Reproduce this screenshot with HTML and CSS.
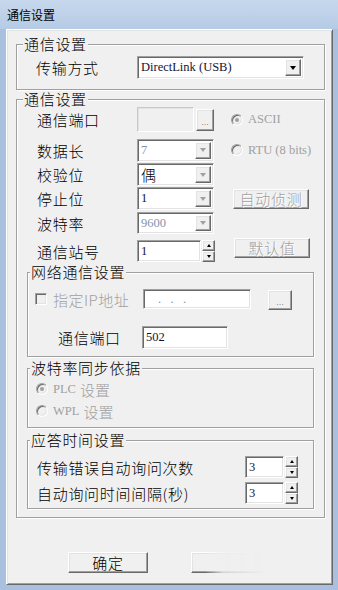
FILE: index.html
```html
<!DOCTYPE html>
<html lang="zh-CN">
<head>
    <meta charset="UTF-8">
    <meta name="viewport" content="width=device-width, initial-scale=1.0">
    <title>通信设置</title>
    <link rel="stylesheet" href="styles.css">
</head>
<body>

    <div class="window">
        <div class="titlebar">通信设置</div>

        <div class="client">
            <fieldset class="group g-mode">
                <legend>通信设置</legend>
                <div class="mode-row">
                    <span class="label mode-label">传输方式</span>
                    <div class="combo wide">
                        <span class="value">DirectLink (USB)</span>
                        <span class="drop"><i class="tri"></i></span>
                    </div>
                </div>
            </fieldset>

            <fieldset class="group g-comm">
                <legend>通信设置</legend>
                <div class="fields">
                    <div class="row r1">
                        <span class="label">通信端口</span>
                        <div class="port-pick">
                            <div class="field off port-field"></div>
                            <button class="btn dots">...</button>
                        </div>
                        <div class="radio-item"><span class="radio on"></span>ASCII</div>
                    </div>
                    <div class="row r2">
                        <span class="label">数据长</span>
                        <div class="combo"><span class="value dim">7</span><span class="drop"><i class="tri gray"></i></span></div>
                        <div class="radio-item"><span class="radio"></span>RTU (8 bits)</div>
                    </div>
                    <div class="row r3">
                        <span class="label">校验位</span>
                        <div class="combo"><span class="value cjk">偶</span><span class="drop"><i class="tri gray"></i></span></div>
                    </div>
                    <div class="row r4">
                        <span class="label">停止位</span>
                        <div class="combo"><span class="value">1</span><span class="drop"><i class="tri gray"></i></span></div>
                        <button class="btn side off">自动侦测</button>
                    </div>
                    <div class="row r5">
                        <span class="label">波特率</span>
                        <div class="combo short"><span class="value dim">9600</span><span class="drop"><i class="tri gray"></i></span></div>
                    </div>
                    <div class="row r6">
                        <span class="label">通信站号</span>
                        <div class="spin-box">
                            <div class="field station"><span class="value">1</span></div>
                            <div class="spin"><span><i class="tri up small"></i></span><span><i class="tri small"></i></span></div>
                        </div>
                        <button class="btn side off raise">默认值</button>
                    </div>
                </div>

                <fieldset class="group sub g-net">
                    <legend>网络通信设置</legend>
                    <div class="ip-row">
                        <div class="check-item"><span class="check"></span>指定IP地址</div>
                        <div class="field ip-field"><span class="value dim">.&nbsp;&nbsp;&nbsp;.&nbsp;&nbsp;&nbsp;.</span></div>
                        <button class="btn dots ip-dots">...</button>
                    </div>
                    <div class="net-port">
                        <span class="label">通信端口</span>
                        <div class="field net-field"><span class="value">502</span></div>
                    </div>
                </fieldset>

                <fieldset class="group sub g-sync">
                    <legend>波特率同步依据</legend>
                    <div class="sync-row"><div class="radio-item"><span class="radio on"></span>PLC <span class="cjk">设置</span></div></div>
                    <div class="sync-row"><div class="radio-item"><span class="radio"></span>WPL <span class="cjk">设置</span></div></div>
                </fieldset>

                <fieldset class="group sub g-reply">
                    <legend>应答时间设置</legend>
                    <div class="reply-row">
                        <span class="label">传输错误自动询问次数</span>
                        <div class="spin-box">
                            <div class="field small-field"><span class="value">3</span></div>
                            <div class="spin"><span><i class="tri up small"></i></span><span><i class="tri small"></i></span></div>
                        </div>
                    </div>
                    <div class="reply-row second">
                        <span class="label">自动询问时间间隔(秒)</span>
                        <div class="spin-box">
                            <div class="field small-field"><span class="value">3</span></div>
                            <div class="spin"><span><i class="tri up small"></i></span><span><i class="tri small"></i></span></div>
                        </div>
                    </div>
                </fieldset>
            </fieldset>

            <div class="actions">
                <button class="btn action">确定</button>
                <button class="btn action faded"></button>
            </div>
        </div>
    </div>

</body>
</html>
```

FILE: styles.css
```css
* {
    box-sizing: border-box;
}
body {
    margin: 0;
    background: #a9c1de;
    font-family: "Noto Sans CJK SC", sans-serif;
    color: #000;
}
.window {
    width: 338px;
    height: 590px;
    background: #a9c1de;
    display: flex;
    flex-direction: column;
}
.titlebar {
    height: 29px;
    line-height: 29px;
    padding-left: 7px;
    font-size: 12px;
    background: linear-gradient(to bottom, #c7d8ed, #b5cbe5);
}
.client {
    margin-left: 6px;
    width: 327px;
    height: 556px;
    background: #f0f0f0;
    border: 1px solid;
    border-color: #fff #696969 #696969 #fff;
    box-shadow: inset 1px 1px 0 #e3e3e3, inset -1px -1px 0 #a0a0a0;
    padding: 6px 7px 0 9px;
}

/* group boxes */
.group {
    margin: 0;
    min-width: 0;
    border: 1px solid #a0a0a0;
    box-shadow: inset 1px 1px 0 #fff, 1px 1px 0 #fff;
    padding: 0 10px 8px 6px;
}
.group legend {
    padding: 0 1px;
    font-size: 15px;
    line-height: 16px;
    font-weight: 300;
    letter-spacing: 0.7px;
    background: #f0f0f0;
}
.g-mode { padding-top: 4px; padding-bottom: 10px; }
.g-comm { margin-top: 1px; }
.sub {
    margin-left: 4px;
    padding: 0 0 0 2px;
}
.g-net { margin-top: 2px; padding-top: 9px; padding-bottom: 7px; }
.g-sync { margin-top: 3px; padding-top: 2px; padding-bottom: 5px; }
.g-reply { margin-top: 4px; padding-top: 8px; padding-bottom: 4px; }

.label {
    font-size: 15px;
    font-weight: 300;
    letter-spacing: 0.7px;
    white-space: nowrap;
}

/* controls */
.field, .combo {
    background: #fff;
    border: 1px solid;
    border-color: #a0a0a0 #fff #fff #a0a0a0;
    box-shadow: inset 1px 1px 0 #696969, inset -1px -1px 0 #e3e3e3;
    display: flex;
    align-items: center;
}
.field.off {
    background: #f0f0f0;
    border-color: #c8c8c8 #fff #fff #c8c8c8;
    box-shadow: inset 1px 1px 0 #e3e3e3;
}
.value {
    font-family: "Liberation Serif", serif;
    font-size: 12.5px;
    color: #141432;
    padding-left: 3px;
    white-space: nowrap;
}
.value.dim { color: #8394ad; }
.value.cjk, .cjk {
    font-family: "Noto Sans CJK SC", sans-serif;
    font-weight: 300;
}
.value.cjk { font-size: 15px; color: #000; }
.combo {
    width: 77px;
    height: 23px;
    justify-content: space-between;
    padding: 2px;
}
.combo.wide { width: 167px; }
.combo.short { height: 22px; }
.combo .value { padding-left: 1px; }
.drop, .spin span, .btn {
    background: #f0f0f0;
    border: 1px solid;
    border-color: #fff #696969 #696969 #fff;
    box-shadow: inset -1px -1px 0 #a0a0a0, inset 1px 1px 0 #e3e3e3;
}
.drop {
    width: 16px;
    height: 100%;
    display: flex;
    align-items: center;
    justify-content: center;
}
.tri {
    width: 0;
    height: 0;
    border-left: 3.5px solid transparent;
    border-right: 3.5px solid transparent;
    border-top: 4px solid #000;
}
.tri.gray { border-top-color: #a0a0a0; }
.tri.small {
    border-left-width: 2.5px;
    border-right-width: 2.5px;
    border-top-width: 3px;
}
.tri.up {
    border-top: none;
    border-bottom: 3px solid #000;
}
.btn {
    display: flex;
    align-items: center;
    justify-content: center;
    font-family: "Noto Sans CJK SC", sans-serif;
    font-size: 15px;
    font-weight: 300;
    letter-spacing: 0.7px;
    line-height: 18px;
    padding: 0;
    color: #000;
}
.btn.off {
    color: #a0a0a0;
    text-shadow: 1px 1px 0 #fff;
}
.dots {
    font-family: "Liberation Sans", sans-serif;
    font-size: 9px;
    letter-spacing: 0;
    color: #8a8a8a;
    padding-top: 4px;
}
.spin-box {
    display: flex;
    height: 22px;
}
.spin {
    display: flex;
    flex-direction: column;
    width: 13px;
    margin-left: 1px;
}
.spin span {
    flex: 1;
    display: flex;
    align-items: center;
    justify-content: center;
}

/* radio and check */
.radio-item, .check-item {
    display: flex;
    align-items: center;
    color: #a0a0a0;
    font-family: "Liberation Serif", serif;
    font-size: 12.5px;
    white-space: nowrap;
}
.radio-item .cjk {
    font-size: 15px;
    margin-left: 4px;
}
.radio {
    position: relative;
    width: 12px;
    height: 12px;
    margin-right: 5px;
    border-radius: 50%;
    border: 1px solid;
    border-color: #a0a0a0 #fff #fff #a0a0a0;
    box-shadow: inset 1px 1px 0 #696969, inset -1px -1px 0 #e3e3e3;
    background: #f0f0f0;
}
.radio.on::after {
    content: "";
    position: absolute;
    left: 3px;
    top: 3px;
    width: 4px;
    height: 4px;
    border-radius: 50%;
    background: #a0a0a0;
}
.check-item {
    font-family: "Noto Sans CJK SC", sans-serif;
    font-size: 15px;
    font-weight: 300;
    letter-spacing: 0.5px;
    width: 108px;
    margin-left: 5px;
}
.check {
    width: 12px;
    height: 12px;
    margin-right: 6px;
    border: 1px solid;
    border-color: #a0a0a0 #fff #fff #a0a0a0;
    box-shadow: inset 1px 1px 0 #696969, inset -1px -1px 0 #e3e3e3;
    background: #f0f0f0;
}

/* group 1 */
.mode-row {
    display: flex;
    align-items: center;
    height: 23px;
}
.mode-label {
    margin-left: 13px;
    width: 101px;
}

/* group 2 rows */
.fields { margin-left: 14px; }
.row {
    display: flex;
    align-items: center;
}
.row .label { width: 100px; }
.row > .combo, .row > .port-pick, .row > .spin-box { flex: none; }
.row > .radio-item { margin-left: 17px; }
.r1 { height: 25px; }
.r2 { height: 24px; margin-top: 6px; }
.r3 { height: 23px; margin-top: 1px; }
.r4 { height: 23px; margin-top: 1px; }
.r5 { height: 22px; margin-top: 2px; }
.r6 { height: 22px; margin-top: 6px; }
.port-pick {
    display: flex;
    align-items: center;
    width: 77px;
    height: 25px;
}
.port-field { width: 57px; height: 25px; }
.port-pick .dots {
    width: 18px;
    height: 22px;
    margin-left: 2px;
}
.station { width: 64px; }
.side {
    width: 76px;
    height: 20px;
    margin-left: 19px;
}
.side.raise { margin-top: -6px; }

/* network group */
.ip-row {
    display: flex;
    align-items: center;
    height: 20px;
}
.ip-field { width: 108px; height: 20px; }
.ip-field .value { padding-left: 14px; }
.ip-dots {
    width: 24px;
    height: 20px;
    margin-left: 17px;
    margin-top: 2px;
}
.net-port {
    display: flex;
    align-items: center;
    height: 23px;
    margin-top: 17px;
}
.net-port .label {
    margin-left: 28px;
    width: 84px;
}
.net-field { width: 86px; height: 23px; }

/* baud sync group */
.sync-row {
    display: flex;
    align-items: center;
    height: 22px;
    padding-left: 6px;
}

/* reply group */
.reply-row {
    display: flex;
    align-items: center;
    height: 22px;
}
.reply-row.second { margin-top: 4px; }
.reply-row .label {
    margin-left: 7px;
    width: 208px;
}
.small-field { width: 39px; }

/* bottom buttons */
.actions {
    display: flex;
    margin-top: 34px;
}
.action {
    width: 80px;
    height: 21px;
    margin-left: 52px;
}
.action.faded {
    margin-left: 43px;
    -webkit-mask-image: linear-gradient(to right, #000 14px, rgba(0, 0, 0, 0.2) 40%, transparent 95%);
    mask-image: linear-gradient(to right, #000 14px, rgba(0, 0, 0, 0.2) 40%, transparent 95%);
}
```
